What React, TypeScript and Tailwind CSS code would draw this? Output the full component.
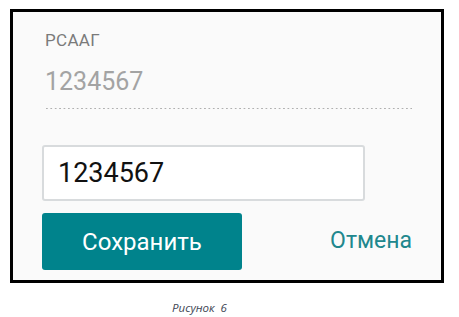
const App = () => {
  return (
    <div className="min-h-screen bg-white pt-[9px] pl-[10px]" style={{ fontFamily: "Roboto, 'Liberation Sans', sans-serif" }}>
      <div className="w-[434px] h-[274px] border-[3px] border-black bg-[#fafafa] pl-[29px] pt-[19px]">
        <div className="w-[370px]">
          <div className="pl-[3px]">
            <p className="text-[17px] leading-[19px] tracking-[0.3px] text-[#7a7a7a]">РСААГ</p>
            <p className="mt-[18px] text-[25px] leading-[28px] text-[#a3a3a3]">1234567</p>
          </div>
          <div className="mt-[12px] ml-[4px] h-px w-[366px] bg-[linear-gradient(to_right,#b0b0b0_1.5px,transparent_1.5px)] bg-[length:4.4px_1px]" />

          <input
            readOnly
            value="1234567"
            className="mt-[36px] block h-[56px] w-[323px] rounded-[3px] border-2 border-[#d8dbdd] bg-white px-[14px] text-[27px] text-[#111] outline-none"
          />

          <div className="mt-[12px] flex items-center justify-between">
            <button className="h-[57px] w-[200px] rounded-[3px] bg-[#00838c] text-[24px] font-normal text-white">
              Сохранить
            </button>
            <button className="text-[23px] text-[#20878d]">Отмена</button>
          </div>
        </div>
      </div>

      <p
        className="mt-[18px] w-[379px] text-center text-[11.5px] leading-[14px] italic text-[#3e4654]"
        style={{ fontFamily: "'Open Sans', 'Liberation Sans', sans-serif" }}
      >
        Рисунок&nbsp;&nbsp;6
      </p>
    </div>
  );
};

export default App;
